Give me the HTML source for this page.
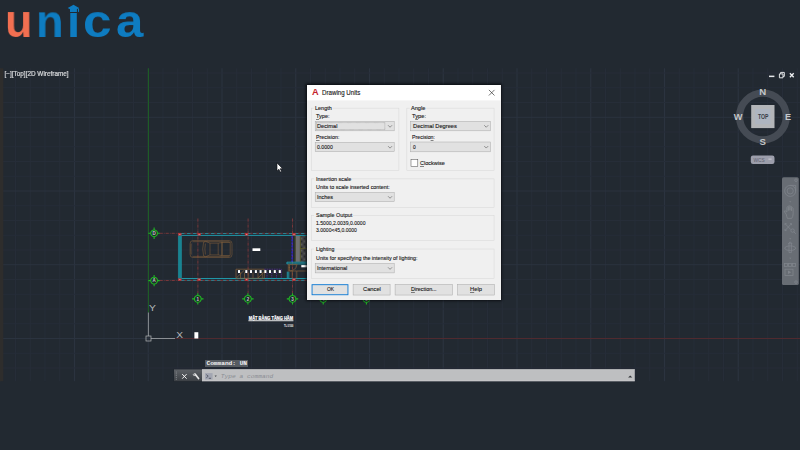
<!DOCTYPE html>
<html lang="en"><head><meta charset="utf-8"><title>Drawing Units</title>
<style>
html,body{margin:0;padding:0}
body{width:800px;height:450px;overflow:hidden;background:#222931;position:relative;font-family:"Liberation Sans",sans-serif}
.abs{position:absolute}
.t{position:absolute;white-space:nowrap;line-height:1;margin:0;padding:0}
#dlg{position:absolute;left:307.4px;top:84.6px;width:193.6px;height:215.4px;background:#f0f0f0;box-shadow:0 0 2.5px 1.2px rgba(5,7,10,.85)}
.d{color:#161616;-webkit-text-stroke:0.12px #161616}
u{text-decoration-thickness:0.5px;text-underline-offset:0.5px;text-decoration-color:rgba(20,20,20,.5)}
</style></head><body>

<svg class="abs" style="left:0;top:0" width="800" height="450" viewBox="0 0 800 450">
<g shape-rendering="auto" stroke-width="1.2">
<line x1="0.75" y1="68.3" x2="0.75" y2="381.2" stroke="#2b333f"/>
<line x1="15.50" y1="68.3" x2="15.50" y2="381.2" stroke="#262d38"/>
<line x1="30.25" y1="68.3" x2="30.25" y2="381.2" stroke="#262d38"/>
<line x1="45.00" y1="68.3" x2="45.00" y2="381.2" stroke="#262d38"/>
<line x1="59.75" y1="68.3" x2="59.75" y2="381.2" stroke="#262d38"/>
<line x1="74.50" y1="68.3" x2="74.50" y2="381.2" stroke="#2b333f"/>
<line x1="89.25" y1="68.3" x2="89.25" y2="381.2" stroke="#262d38"/>
<line x1="104.00" y1="68.3" x2="104.00" y2="381.2" stroke="#262d38"/>
<line x1="118.75" y1="68.3" x2="118.75" y2="381.2" stroke="#262d38"/>
<line x1="133.50" y1="68.3" x2="133.50" y2="381.2" stroke="#262d38"/>
<line x1="148.25" y1="68.3" x2="148.25" y2="381.2" stroke="#2b333f"/>
<line x1="163.00" y1="68.3" x2="163.00" y2="381.2" stroke="#262d38"/>
<line x1="177.75" y1="68.3" x2="177.75" y2="381.2" stroke="#262d38"/>
<line x1="192.50" y1="68.3" x2="192.50" y2="381.2" stroke="#262d38"/>
<line x1="207.25" y1="68.3" x2="207.25" y2="381.2" stroke="#262d38"/>
<line x1="222.00" y1="68.3" x2="222.00" y2="381.2" stroke="#2b333f"/>
<line x1="236.75" y1="68.3" x2="236.75" y2="381.2" stroke="#262d38"/>
<line x1="251.50" y1="68.3" x2="251.50" y2="381.2" stroke="#262d38"/>
<line x1="266.25" y1="68.3" x2="266.25" y2="381.2" stroke="#262d38"/>
<line x1="281.00" y1="68.3" x2="281.00" y2="381.2" stroke="#262d38"/>
<line x1="295.75" y1="68.3" x2="295.75" y2="381.2" stroke="#2b333f"/>
<line x1="310.50" y1="68.3" x2="310.50" y2="381.2" stroke="#262d38"/>
<line x1="325.25" y1="68.3" x2="325.25" y2="381.2" stroke="#262d38"/>
<line x1="340.00" y1="68.3" x2="340.00" y2="381.2" stroke="#262d38"/>
<line x1="354.75" y1="68.3" x2="354.75" y2="381.2" stroke="#262d38"/>
<line x1="369.50" y1="68.3" x2="369.50" y2="381.2" stroke="#2b333f"/>
<line x1="384.25" y1="68.3" x2="384.25" y2="381.2" stroke="#262d38"/>
<line x1="399.00" y1="68.3" x2="399.00" y2="381.2" stroke="#262d38"/>
<line x1="413.75" y1="68.3" x2="413.75" y2="381.2" stroke="#262d38"/>
<line x1="428.50" y1="68.3" x2="428.50" y2="381.2" stroke="#262d38"/>
<line x1="443.25" y1="68.3" x2="443.25" y2="381.2" stroke="#2b333f"/>
<line x1="458.00" y1="68.3" x2="458.00" y2="381.2" stroke="#262d38"/>
<line x1="472.75" y1="68.3" x2="472.75" y2="381.2" stroke="#262d38"/>
<line x1="487.50" y1="68.3" x2="487.50" y2="381.2" stroke="#262d38"/>
<line x1="502.25" y1="68.3" x2="502.25" y2="381.2" stroke="#262d38"/>
<line x1="517.00" y1="68.3" x2="517.00" y2="381.2" stroke="#2b333f"/>
<line x1="531.75" y1="68.3" x2="531.75" y2="381.2" stroke="#262d38"/>
<line x1="546.50" y1="68.3" x2="546.50" y2="381.2" stroke="#262d38"/>
<line x1="561.25" y1="68.3" x2="561.25" y2="381.2" stroke="#262d38"/>
<line x1="576.00" y1="68.3" x2="576.00" y2="381.2" stroke="#262d38"/>
<line x1="590.75" y1="68.3" x2="590.75" y2="381.2" stroke="#2b333f"/>
<line x1="605.50" y1="68.3" x2="605.50" y2="381.2" stroke="#262d38"/>
<line x1="620.25" y1="68.3" x2="620.25" y2="381.2" stroke="#262d38"/>
<line x1="635.00" y1="68.3" x2="635.00" y2="381.2" stroke="#262d38"/>
<line x1="649.75" y1="68.3" x2="649.75" y2="381.2" stroke="#262d38"/>
<line x1="664.50" y1="68.3" x2="664.50" y2="381.2" stroke="#2b333f"/>
<line x1="679.25" y1="68.3" x2="679.25" y2="381.2" stroke="#262d38"/>
<line x1="694.00" y1="68.3" x2="694.00" y2="381.2" stroke="#262d38"/>
<line x1="708.75" y1="68.3" x2="708.75" y2="381.2" stroke="#262d38"/>
<line x1="723.50" y1="68.3" x2="723.50" y2="381.2" stroke="#262d38"/>
<line x1="738.25" y1="68.3" x2="738.25" y2="381.2" stroke="#2b333f"/>
<line x1="753.00" y1="68.3" x2="753.00" y2="381.2" stroke="#262d38"/>
<line x1="767.75" y1="68.3" x2="767.75" y2="381.2" stroke="#262d38"/>
<line x1="782.50" y1="68.3" x2="782.50" y2="381.2" stroke="#262d38"/>
<line x1="797.25" y1="68.3" x2="797.25" y2="381.2" stroke="#262d38"/>
<line x1="0" y1="338.50" x2="800" y2="338.50" stroke="#2b333f"/>
<line x1="0" y1="323.75" x2="800" y2="323.75" stroke="#262d38"/>
<line x1="0" y1="309.00" x2="800" y2="309.00" stroke="#262d38"/>
<line x1="0" y1="294.25" x2="800" y2="294.25" stroke="#262d38"/>
<line x1="0" y1="279.50" x2="800" y2="279.50" stroke="#262d38"/>
<line x1="0" y1="264.75" x2="800" y2="264.75" stroke="#2b333f"/>
<line x1="0" y1="250.00" x2="800" y2="250.00" stroke="#262d38"/>
<line x1="0" y1="235.25" x2="800" y2="235.25" stroke="#262d38"/>
<line x1="0" y1="220.50" x2="800" y2="220.50" stroke="#262d38"/>
<line x1="0" y1="205.75" x2="800" y2="205.75" stroke="#262d38"/>
<line x1="0" y1="191.00" x2="800" y2="191.00" stroke="#2b333f"/>
<line x1="0" y1="176.25" x2="800" y2="176.25" stroke="#262d38"/>
<line x1="0" y1="161.50" x2="800" y2="161.50" stroke="#262d38"/>
<line x1="0" y1="146.75" x2="800" y2="146.75" stroke="#262d38"/>
<line x1="0" y1="132.00" x2="800" y2="132.00" stroke="#262d38"/>
<line x1="0" y1="117.25" x2="800" y2="117.25" stroke="#2b333f"/>
<line x1="0" y1="102.50" x2="800" y2="102.50" stroke="#262d38"/>
<line x1="0" y1="87.75" x2="800" y2="87.75" stroke="#262d38"/>
<line x1="0" y1="73.00" x2="800" y2="73.00" stroke="#262d38"/>
<line x1="0" y1="353.25" x2="800" y2="353.25" stroke="#262d38"/>
<line x1="0" y1="368.00" x2="800" y2="368.00" stroke="#262d38"/>
</g>
<rect x="0" y="68.3" width="3.3" height="312.9" fill="#2e2d2c"/>
<line x1="148.4" y1="68.3" x2="148.4" y2="312.5" stroke="#1a6e1e" stroke-width="0.8"/>
<line x1="175" y1="338.5" x2="800" y2="338.5" stroke="#5e282b" stroke-width="0.75"/>
<g stroke="#8c3a3c" stroke-width="0.8" stroke-dasharray="3.2 1 0.8 1" fill="none">
<line x1="159.6" y1="233.3" x2="307.4" y2="233.3"/>
<line x1="159.6" y1="280.5" x2="307.4" y2="280.5"/>
<line x1="197.9" y1="218.5" x2="197.9" y2="293.4"/>
<line x1="248.1" y1="218.5" x2="248.1" y2="293.4"/>
<line x1="292.5" y1="218.5" x2="292.5" y2="293.4"/>
</g>
<rect x="178.4" y="233.6" width="3.1" height="46.9" fill="#17808e"/>
<g stroke="#1fa3b3" stroke-width="0.9" fill="none">
<path d="M307.4 235.4H181.4M181.4 278.5H307.4"/>
<path d="M178.7 233.6V280.5M181.3 235.4V278.5" stroke-width="0.5" stroke="#22a8b8"/>
<path d="M181 233.5H307.4M181 280.4H307.4" stroke-dasharray="3.4 2.6" stroke="#22a4b4" stroke-width="0.7"/>
</g>
<rect x="178.1" y="233.0" width="3.4" height="2.6" fill="#b93236"/><rect x="179.2" y="234.0" width="1.2" height="0.7" fill="#e2a9a6"/>
<rect x="178.1" y="278.3" width="3.4" height="2.6" fill="#b93236"/><rect x="179.2" y="279.2" width="1.2" height="0.7" fill="#e2a9a6"/>
<rect x="197.5" y="233.0" width="3.4" height="2.6" fill="#b93236"/><rect x="198.6" y="234.0" width="1.2" height="0.7" fill="#e2a9a6"/>
<rect x="197.5" y="278.3" width="3.4" height="2.6" fill="#b93236"/><rect x="198.6" y="279.2" width="1.2" height="0.7" fill="#e2a9a6"/>
<rect x="244.9" y="233.0" width="3.4" height="2.6" fill="#b93236"/><rect x="246.0" y="234.0" width="1.2" height="0.7" fill="#e2a9a6"/>
<rect x="244.9" y="278.3" width="3.4" height="2.6" fill="#b93236"/><rect x="246.0" y="279.2" width="1.2" height="0.7" fill="#e2a9a6"/>
<rect x="292.3" y="233.0" width="3.4" height="2.6" fill="#b93236"/><rect x="293.4" y="234.0" width="1.2" height="0.7" fill="#e2a9a6"/>
<rect x="292.3" y="278.3" width="3.4" height="2.6" fill="#b93236"/><rect x="293.4" y="279.2" width="1.2" height="0.7" fill="#e2a9a6"/>
<g stroke="#85603a" stroke-width="0.55" fill="none">
<rect x="190.1" y="240.6" width="41.9" height="16.9" rx="2.8" ry="3"/>
<path d="M192.6 241.7H229.6M192.6 256.4H229.6M191.2 243.5Q190.8 249 191.2 254.6"/>
<path d="M203.6 242.2Q201.8 249 203.6 255.9L205.6 256.8L210 254.9V243.2L205.6 241.3Z"/>
<path d="M205.4 243.6Q204.4 249 205.4 254.5"/>
<path d="M210 243.2H218.2M210 254.9H218.2M218.2 243.2V254.9"/>
<path d="M218.2 243.2L222 242.5V255.6L218.2 254.9"/>
<rect x="222" y="242.5" width="8.1" height="13.1"/>
</g>
<rect x="252.5" y="248.3" width="7.8" height="2.7" fill="#fff"/>
<line x1="292.1" y1="236.2" x2="292.1" y2="262" stroke="#2626ea" stroke-width="1.2" stroke-dasharray="2.2 0.8"/>
<defs><pattern id="hx" width="1.2" height="1.2" patternUnits="userSpaceOnUse"><rect width="1.2" height="1.2" fill="#5a5a5a"/><rect width="0.6" height="0.6" fill="#2a2c30"/><rect x="0.6" y="0.6" width="0.6" height="0.6" fill="#2a2c30"/></pattern></defs>
<rect x="295.8" y="236" width="4.1" height="25.8" fill="#707071"/>
<rect x="300.4" y="236" width="7.2" height="25.8" fill="url(#hx)"/>
<path d="M295.2 236V261.8M300.4 236V261.8M300.4 248.4H307.6" stroke="#6f6d22" stroke-width="0.6" fill="none"/>
<path d="M286.9 262.2H307.6M286.9 263.9H307.6M286.9 262.2V263.9M287.3 271.6V278.3M288.8 271.6V278.3" stroke="#21b0c2" stroke-width="0.8" fill="none"/>
<rect x="301.3" y="265.1" width="6.4" height="2.2" fill="#fff"/>
<g stroke="#85603a" stroke-width="0.7" fill="none">
<path d="M288 264.6H297.5M288.3 264.6V271.6M289.5 265V271Q296 270.5 296.8 265M289.5 271H296.8M296.8 271V278.3M292.2 271V278.3M296.8 271H307.6M288.6 267.6H290"/>
<path d="M236 269.2H264.3V278.3H236ZM236.3 278L244.5 270"/>
<line x1="240.5" y1="272.5" x2="240.5" y2="278.3"/>
<line x1="244.5" y1="272.5" x2="244.5" y2="278.3"/>
<line x1="248.2" y1="272.5" x2="248.2" y2="278.3"/>
<line x1="253.0" y1="272.5" x2="253.0" y2="278.3"/>
<line x1="258.0" y1="272.5" x2="258.0" y2="278.3"/>
<line x1="262.3" y1="272.5" x2="262.3" y2="278.3"/>
<path d="M258 278L264.3 271.5"/>
</g>
<g stroke="#5c2f9c" stroke-width="0.7" fill="none" stroke-dasharray="1.6 0.8">
<path d="M264.3 269.2H281.3V278.3"/>
<line x1="267.0" y1="272.5" x2="267.0" y2="278.3"/>
<line x1="271.8" y1="272.5" x2="271.8" y2="278.3"/>
<line x1="276.5" y1="272.5" x2="276.5" y2="278.3"/>
</g>
<rect x="238.0" y="270.1" width="2" height="2.9" fill="#fff"/>
<rect x="245.3" y="270.1" width="2" height="2.9" fill="#fff"/>
<rect x="250.0" y="270.1" width="2" height="2.9" fill="#fff"/>
<rect x="254.9" y="270.1" width="2" height="2.9" fill="#fff"/>
<rect x="259.6" y="270.1" width="2" height="2.9" fill="#fff"/>
<rect x="264.4" y="270.1" width="2" height="2.9" fill="#fff"/>
<rect x="269.0" y="270.1" width="2" height="2.9" fill="#fff"/>
<rect x="273.8" y="270.1" width="2" height="2.9" fill="#fff"/>
<rect x="278.8" y="270.1" width="2" height="2.9" fill="#fff"/>
<g transform="translate(154.1 233.3)"><circle r="3.4" fill="#1f2a2c" stroke="#20b824" stroke-width="1.05"/><path d="M-5.7 0H-3.3M3.3 0H5.7M0 -5.7V-3.3M0 3.3V5.7" stroke="#20b824" stroke-width="1.05"/><text x="0" y="1.7" font-size="4.5" font-weight="bold" text-anchor="middle" fill="#c4c8ca" font-family="Liberation Sans, sans-serif">D</text></g>
<g transform="translate(154.1 280.6)"><circle r="3.4" fill="#1f2a2c" stroke="#20b824" stroke-width="1.05"/><path d="M-5.7 0H-3.3M3.3 0H5.7M0 -5.7V-3.3M0 3.3V5.7" stroke="#20b824" stroke-width="1.05"/><text x="0" y="1.7" font-size="4.5" font-weight="bold" text-anchor="middle" fill="#c4c8ca" font-family="Liberation Sans, sans-serif">A</text></g>
<g transform="translate(197.8 298.9)"><circle r="3.4" fill="#1f2a2c" stroke="#20b824" stroke-width="1.05"/><path d="M-5.7 0H-3.3M3.3 0H5.7M0 -5.7V-3.3M0 3.3V5.7" stroke="#20b824" stroke-width="1.05"/><text x="0" y="1.7" font-size="4.5" font-weight="bold" text-anchor="middle" fill="#c4c8ca" font-family="Liberation Sans, sans-serif">1</text></g>
<g transform="translate(247.9 298.9)"><circle r="3.4" fill="#1f2a2c" stroke="#20b824" stroke-width="1.05"/><path d="M-5.7 0H-3.3M3.3 0H5.7M0 -5.7V-3.3M0 3.3V5.7" stroke="#20b824" stroke-width="1.05"/><text x="0" y="1.7" font-size="4.5" font-weight="bold" text-anchor="middle" fill="#c4c8ca" font-family="Liberation Sans, sans-serif">2</text></g>
<g transform="translate(292.5 298.9)"><circle r="3.4" fill="#1f2a2c" stroke="#20b824" stroke-width="1.05"/><path d="M-5.7 0H-3.3M3.3 0H5.7M0 -5.7V-3.3M0 3.3V5.7" stroke="#20b824" stroke-width="1.05"/><text x="0" y="1.7" font-size="4.5" font-weight="bold" text-anchor="middle" fill="#c4c8ca" font-family="Liberation Sans, sans-serif">3</text></g>
<g transform="translate(323.2 298.9)"><circle r="3.4" fill="#1f2a2c" stroke="#20b824" stroke-width="1.05"/><path d="M-5.7 0H-3.3M3.3 0H5.7M0 -5.7V-3.3M0 3.3V5.7" stroke="#20b824" stroke-width="1.05"/><text x="0" y="1.7" font-size="4.5" font-weight="bold" text-anchor="middle" fill="#c4c8ca" font-family="Liberation Sans, sans-serif">4</text></g>
<g transform="translate(366.4 298.9)"><circle r="3.4" fill="#1f2a2c" stroke="#20b824" stroke-width="1.05"/><path d="M-5.7 0H-3.3M3.3 0H5.7M0 -5.7V-3.3M0 3.3V5.7" stroke="#20b824" stroke-width="1.05"/><text x="0" y="1.7" font-size="4.5" font-weight="bold" text-anchor="middle" fill="#c4c8ca" font-family="Liberation Sans, sans-serif">5</text></g>
<g stroke="#b4b7b9" stroke-width="0.7" fill="none">
<path d="M148.4 312.5V336M151 338.5H175"/>
<rect x="146" y="336" width="5" height="5"/>
</g>
<text x="149.0" y="311.1" font-size="8.8" fill="#b4b7b9" textLength="6.9" lengthAdjust="spacingAndGlyphs" font-family="Liberation Sans, sans-serif">Y</text>
<text x="176.2" y="338" font-size="8.3" fill="#b4b7b9" textLength="6.8" lengthAdjust="spacingAndGlyphs" font-family="Liberation Sans, sans-serif">X</text>
<rect x="194.4" y="332.2" width="3.9" height="6.3" fill="#fff"/>
<text x="248.8" y="319.8" font-size="5.6" font-weight="bold" fill="#fff" stroke="#fff" stroke-width="0.22" textLength="44.3" lengthAdjust="spacingAndGlyphs" font-family="Liberation Sans, sans-serif">MẶT BẰNG TẦNG HẦM</text>
<rect x="248.4" y="320.3" width="45" height="0.9" fill="#fff"/>
<text x="284" y="326.6" font-size="3.2" font-weight="bold" fill="#fff" textLength="9.2" lengthAdjust="spacingAndGlyphs" font-family="Liberation Sans, sans-serif">TL:1/100</text>
</svg>
<div class="t" style="left:4.90px;top:-2.65px;font-size:47.0px;font-weight:bold;color:#f26f51;will-change:transform;transform-origin:0 39.79px;transform:scale(0.9525,0.9975)">u</div>
<div class="t" style="left:35.86px;top:-2.89px;font-size:47.0px;font-weight:bold;color:#0e7cc1;will-change:transform;transform-origin:0 39.79px;transform:scale(0.9607,0.9857)">n</div>
<div class="t" style="left:66.69px;top:-2.89px;font-size:47.0px;font-weight:bold;color:#0e7cc1;will-change:transform;transform-origin:0 39.79px;transform:scale(1.0058,0.9922)">i</div>
<div class="t" style="left:82.75px;top:-2.75px;font-size:47.0px;font-weight:bold;color:#0e7cc1;will-change:transform;transform-origin:0 39.79px;transform:scale(1.0911,0.9949)">c</div>
<div class="t" style="left:116.32px;top:-2.75px;font-size:47.0px;font-weight:bold;color:#0e7cc1;will-change:transform;transform-origin:0 39.79px;transform:scale(1.0468,0.9949)">a</div>
<div class="abs" style="left:66px;top:0;width:15px;height:12.6px;background:#222931"></div>
<svg class="abs" style="left:66px;top:3px" width="15" height="11" viewBox="66 3 15 11"><path d="M73.5 4.7L79.1 8.1L76.9 9.2V11.9H70V9.2L67.7 8.1Z" fill="#0e7cc1"/><path d="M78.5 8.5V11.9" stroke="#0e7cc1" stroke-width="1.1" fill="none"/></svg>
<div class="t" style="left:4.5px;top:71.35px;font-size:6.4px;color:#d2d4d6;-webkit-text-stroke:0.22px #d2d4d6">[−][Top][2D Wireframe]</div>
<svg class="abs" style="left:720px;top:60px" width="80" height="120" viewBox="720 60 80 120" font-family="Liberation Sans, sans-serif">
<rect x="769" y="75.6" width="5.4" height="1.5" fill="#e4e6e8"/>
<path d="M779.4 73.9H783V77.8H779.4ZM780.6 73.9V72.4H784.3V76.4H783" stroke="#e4e6e8" stroke-width="1" fill="none"/>
<path d="M789.9 73.3L793.7 77.3M793.7 73.3L789.9 77.3" stroke="#eceef0" stroke-width="1.3" fill="none"/>
<circle cx="762.9" cy="116.5" r="23.4" fill="none" stroke="#454b54" stroke-width="7.2"/>
<rect x="751.2" y="105" width="23.3" height="23.1" fill="#b3b5b8"/>
<rect x="755.2" y="109" width="15.3" height="15.1" fill="#aeb5c0"/>
<text x="758" y="119" font-size="6.6" font-weight="bold" fill="#383d47" textLength="10.5" lengthAdjust="spacingAndGlyphs">TOP</text>
<text x="762.8" y="95.4" font-size="9.6" font-weight="bold" text-anchor="middle" fill="#c6c8ca">N</text>
<text x="762.8" y="145.4" font-size="9.6" font-weight="bold" text-anchor="middle" fill="#c6c8ca">S</text>
<text x="738" y="120.1" font-size="9.2" font-weight="bold" text-anchor="middle" fill="#c6c8ca">W</text>
<text x="788" y="120.1" font-size="9.2" font-weight="bold" text-anchor="middle" fill="#c6c8ca">E</text>
<rect x="750.8" y="155.6" width="23.7" height="8.4" rx="2.2" fill="#9c9eab"/>
<text x="753.6" y="162" font-size="5.4" fill="#5e6270" textLength="11.2" lengthAdjust="spacingAndGlyphs">WCS</text>
<rect x="768.4" y="158.4" width="3.2" height="1.6" fill="#b9bbc4"/>
</svg>
<svg class="abs" style="left:778px;top:174px" width="22" height="114" viewBox="778 174 22 114">
<rect x="782" y="177.3" width="16.8" height="107.7" rx="1.6" fill="#686d74"/>
<g stroke="#7f848b" stroke-width="0.8" fill="none">
<circle cx="796" cy="180.2" r="1.3"/>
<circle cx="796" cy="282.1" r="1.3"/>
<circle cx="790.2" cy="190.9" r="5.5"/><circle cx="790.2" cy="190.9" r="3.1"/><path d="M790.2 185.4H795.7V190.9"/>
<g transform="translate(789 212) scale(1.18) translate(-789 -211.6)"><path d="M786.6 213.4L785.2 211.6Q784.6 210.6 785.8 210.6L787.2 211.6V207.6Q787.8 206.6 788.4 207.6V210.4V206.6Q789.1 205.7 789.8 206.6V210.2V207Q790.5 206.2 791.2 207V210.6V208.2Q791.9 207.5 792.5 208.4V213.2Q792.4 215.6 791.3 217H787.6Q787 215 786.6 213.4Z" stroke-width="0.7"/></g>
<path d="M785 223.6L790.8 229.6M785 230.6L791.5 223.6M785 223.6H786.6M785 223.6V225.2M791.5 223.6H789.9M791.5 223.6V225.2M785 230.6H786.6M785 230.6V229"/><circle cx="792.6" cy="230.6" r="1.7"/><path d="M793.8 231.8L795.8 233.8"/>
<ellipse cx="790.2" cy="248.2" rx="5.4" ry="2.3"/><path d="M789 243.2V252.6H791.4V243.2ZM788.2 244L790.2 241.8L792.2 244"/>
<rect x="784.6" y="263.4" width="3" height="3"/><rect x="788.6" y="263.4" width="3" height="3"/><rect x="792.6" y="263.4" width="3" height="3"/><rect x="785" y="269.2" width="8" height="6.2"/>
</g>
<path d="M788 270.6L791.2 272.3L788 274Z" fill="#7f848b"/>
<path d="M789.2 201.2H791.4L790.3 202.4ZM789.2 238.3H791.4L790.3 239.5ZM789.2 257.8H791.4L790.3 259Z" fill="#7f848b"/>
</svg>
<div class="abs" style="left:205.2px;top:359.7px;width:43.3px;height:7.3px;background:#565b61"></div>
<div class="t" style="left:206.5px;top:361.3px;font-size:6.2px;font-family:'Liberation Mono',monospace;color:#f4f4f4;font-weight:bold;letter-spacing:-0.03px">Command: UN</div>
<svg class="abs" style="left:172px;top:367px" width="466" height="17" viewBox="172 367 466 17">
<defs><linearGradient id="cg" x1="0" y1="0" x2="0" y2="1"><stop offset="0" stop-color="#5d6166"/><stop offset="1" stop-color="#3c4045"/></linearGradient></defs>
<rect x="173.6" y="368.9" width="461.5" height="12.7" fill="#191e25" opacity="0.55"/>
<rect x="174" y="369.4" width="28.2" height="11.8" fill="url(#cg)"/>
<rect x="202" y="369.4" width="432.8" height="11.8" fill="#bebfc1"/>
<rect x="202" y="369.4" width="432.8" height="0.7" fill="#cbccce"/>
<rect x="202" y="380.5" width="432.8" height="0.7" fill="#c9cacc"/>
<path d="M176.3 371.6V380" stroke="#8a8e93" stroke-width="1" stroke-dasharray="0.9 0.9" fill="none"/>
<path d="M182.2 374.1L186.6 378.7M186.6 374.1L182.2 378.7" stroke="#f2f2f2" stroke-width="1" fill="none"/>
<path d="M193.4 373.1Q195.8 372.4 196.5 374.5L199.4 378.3Q199.6 379.6 198.3 379.4L195.3 375.7Q193 376 192.6 373.9L194.3 374.8L195 373.9Z" fill="#e8e8e8"/>
<rect x="205" y="373.1" width="7.6" height="6.4" fill="#a2a6b2"/>
<path d="M206.3 374.6L208.2 376.2L206.3 377.8M208.8 378.3H211" stroke="#3a3e4a" stroke-width="0.7" fill="none"/>
<path d="M214.6 375.6H216.8L215.7 376.9Z" fill="#45484e"/>
<path d="M628.1 377.5H632.3L630.2 375.5Z" fill="#34373c"/>
</svg>
<div class="t" style="left:220.7px;top:374.1px;font-size:6.25px;font-family:'Liberation Mono',monospace;font-style:italic;color:#8b8e94">Type a command</div>
<div id="dlg">
<svg class="abs" style="left:0;top:0" width="193.6" height="215.4" viewBox="307.4 84.6 193.6 215.4">
<rect x="307.4" y="84.6" width="193.6" height="15.4" fill="#fff"/>
<path d="M489.3 89.5L494.9 95.1M494.9 89.5L489.3 95.1" stroke="#2a2a2a" stroke-width="0.65" fill="none"/>
<rect x="311.90" y="107.75" width="87.40" height="62.25" fill="none" stroke="#d6d6d6" stroke-width="0.5"/>
<rect x="314.20" y="106.75" width="18.80" height="2" fill="#f0f0f0"/>
<rect x="407.25" y="107.75" width="87.20" height="62.25" fill="none" stroke="#d6d6d6" stroke-width="0.5"/>
<rect x="410.20" y="106.75" width="16.40" height="2" fill="#f0f0f0"/>
<rect x="311.90" y="178.50" width="182.55" height="28.40" fill="none" stroke="#d6d6d6" stroke-width="0.5"/>
<rect x="314.60" y="177.50" width="37.40" height="2" fill="#f0f0f0"/>
<rect x="311.90" y="215.20" width="182.55" height="25.05" fill="none" stroke="#d6d6d6" stroke-width="0.5"/>
<rect x="314.60" y="214.20" width="38.40" height="2" fill="#f0f0f0"/>
<rect x="311.90" y="248.60" width="182.55" height="29.50" fill="none" stroke="#d6d6d6" stroke-width="0.5"/>
<rect x="314.60" y="247.60" width="20.40" height="2" fill="#f0f0f0"/>
<rect x="315.60" y="121.00" width="79.00" height="9.40" fill="#e1e1e1" stroke="#a8a8a8" stroke-width="0.5"/>
<rect x="316.80" y="122.20" width="68.40" height="7.00" fill="none" stroke="#6a6a6a" stroke-width="0.45" stroke-dasharray="0.45 0.45"/>
<path d="M388.45 124.85L390.45 126.85L392.45 124.85" stroke="#4a4a4a" stroke-width="0.55" fill="none"/>
<rect x="315.60" y="141.90" width="79.00" height="9.40" fill="#e1e1e1" stroke="#a8a8a8" stroke-width="0.5"/>
<path d="M388.45 145.75L390.45 147.75L392.45 145.75" stroke="#4a4a4a" stroke-width="0.55" fill="none"/>
<rect x="411.00" y="121.00" width="79.80" height="9.40" fill="#e1e1e1" stroke="#a8a8a8" stroke-width="0.5"/>
<path d="M484.65 124.85L486.65 126.85L488.65 124.85" stroke="#4a4a4a" stroke-width="0.55" fill="none"/>
<rect x="411.00" y="141.60" width="79.80" height="9.80" fill="#e1e1e1" stroke="#a8a8a8" stroke-width="0.5"/>
<path d="M484.65 145.65L486.65 147.65L488.65 145.65" stroke="#4a4a4a" stroke-width="0.55" fill="none"/>
<rect x="315.60" y="192.10" width="79.00" height="9.20" fill="#e1e1e1" stroke="#a8a8a8" stroke-width="0.5"/>
<path d="M388.45 195.85L390.45 197.85L392.45 195.85" stroke="#4a4a4a" stroke-width="0.55" fill="none"/>
<rect x="315.60" y="263.10" width="79.00" height="9.40" fill="#e1e1e1" stroke="#a8a8a8" stroke-width="0.5"/>
<path d="M388.45 266.95L390.45 268.95L392.45 266.95" stroke="#4a4a4a" stroke-width="0.55" fill="none"/>
<rect x="411.4" y="159.3" width="6.8" height="6.6" fill="#fff" stroke="#4a4a4a" stroke-width="0.5"/>
<rect x="312.45" y="284.30" width="35.90" height="10.05" fill="#e1e1e1" stroke="#0a78d4" stroke-width="0.9"/>
<rect x="353.50" y="284.00" width="37.00" height="10.65" fill="#e1e1e1" stroke="#a8a8a8" stroke-width="0.5"/>
<rect x="395.50" y="284.00" width="57.25" height="10.65" fill="#e1e1e1" stroke="#a8a8a8" stroke-width="0.5"/>
<rect x="458.10" y="284.00" width="36.65" height="10.65" fill="#e1e1e1" stroke="#a8a8a8" stroke-width="0.5"/>
</svg>
<div class="t" style="left:4.60px;top:3.40px;font-size:9.2px;font-weight:bold;color:#c4202b">A</div>
<div class="t d" style="left:14.40px;top:5.00px;font-size:6.50px;transform-origin:0 0;transform:scaleX(0.9492);">Drawing Units</div>
<div class="t d" style="left:7.80px;top:21.46px;font-size:5.95px;transform-origin:0 0;transform:scaleX(0.9231)">Length</div>
<div class="t d" style="left:103.80px;top:21.46px;font-size:5.95px;transform-origin:0 0;transform:scaleX(0.9463)">Angle</div>
<div class="t d" style="left:8.20px;top:92.46px;font-size:5.95px;transform-origin:0 0;transform:scaleX(0.9227)">Insertion scale</div>
<div class="t d" style="left:8.20px;top:128.46px;font-size:5.95px;transform-origin:0 0;transform:scaleX(0.9171)">Sample Output</div>
<div class="t d" style="left:8.20px;top:162.46px;font-size:5.95px;transform-origin:0 0;transform:scaleX(0.8828)">Lighting</div>
<div class="t d" style="left:8.60px;top:29.46px;font-size:5.95px;transform-origin:0 0;transform:scaleX(0.9277);"><u>T</u>ype:</div>
<div class="t d" style="left:9.60px;top:39.46px;font-size:5.95px;transform-origin:0 0;transform:scaleX(0.9539);">Decimal</div>
<div class="t d" style="left:8.60px;top:50.46px;font-size:5.95px;transform-origin:0 0;transform:scaleX(0.8957);"><u>P</u>recision:</div>
<div class="t d" style="left:9.60px;top:60.46px;font-size:5.95px;transform-origin:0 0;transform:scaleX(0.8682);">0.0000</div>
<div class="t d" style="left:104.60px;top:29.46px;font-size:5.95px;transform-origin:0 0;transform:scaleX(0.9620);">T<u>y</u>pe:</div>
<div class="t d" style="left:105.60px;top:39.46px;font-size:5.95px;transform-origin:0 0;transform:scaleX(0.9642);">Decimal Degrees</div>
<div class="t d" style="left:104.60px;top:50.46px;font-size:5.95px;transform-origin:0 0;transform:scaleX(0.8804);">Precisio<u>n</u>:</div>
<div class="t d" style="left:105.60px;top:60.76px;font-size:5.60px;transform-origin:0 0;transform:scaleX(0.8669);">0</div>
<div class="t d" style="left:112.20px;top:76.46px;font-size:5.95px;transform-origin:0 0;transform:scaleX(0.9298);"><u>C</u>lockwise</div>
<div class="t d" style="left:8.60px;top:100.46px;font-size:5.95px;transform-origin:0 0;transform:scaleX(0.9095);">Units to scale inserted content:</div>
<div class="t d" style="left:9.60px;top:110.46px;font-size:5.95px;transform-origin:0 0;transform:scaleX(0.9127);">Inches</div>
<div class="t d" style="left:8.60px;top:136.46px;font-size:5.95px;transform-origin:0 0;transform:scaleX(0.8566);">1.5000,2.0039,0.0000</div>
<div class="t d" style="left:8.60px;top:143.46px;font-size:5.95px;transform-origin:0 0;transform:scaleX(0.8516);">3.0000&lt;45,0.0000</div>
<div class="t d" style="left:8.60px;top:171.46px;font-size:5.95px;transform-origin:0 0;transform:scaleX(0.9053);">Units for specifying the intensity of lighting:</div>
<div class="t d" style="left:9.60px;top:181.46px;font-size:5.95px;transform-origin:0 0;transform:scaleX(0.9252);">International</div>
<div class="t d" style="left:19.50px;top:202.46px;font-size:5.95px;transform-origin:0 0;transform:scaleX(0.8259);">OK</div>
<div class="t d" style="left:55.70px;top:202.46px;font-size:5.95px;transform-origin:0 0;transform:scaleX(0.9665);">Cancel</div>
<div class="t d" style="left:103.90px;top:202.46px;font-size:5.95px;transform-origin:0 0;transform:scaleX(0.9002);"><u>D</u>irection...</div>
<div class="t d" style="left:162.60px;top:202.46px;font-size:5.95px;transform-origin:0 0;transform:scaleX(0.9725);"><u>H</u>elp</div>
</div>
<svg class="abs" style="left:275px;top:161px" width="10" height="13" viewBox="275 161 10 13"><path d="M277 162.9V170.9L278.9 169.2L280.2 172.1L281.5 171.5L280.2 168.7H282.6Z" fill="#fff" stroke="#0c0e12" stroke-width="0.6" stroke-linejoin="round"/></svg>
</body></html>
